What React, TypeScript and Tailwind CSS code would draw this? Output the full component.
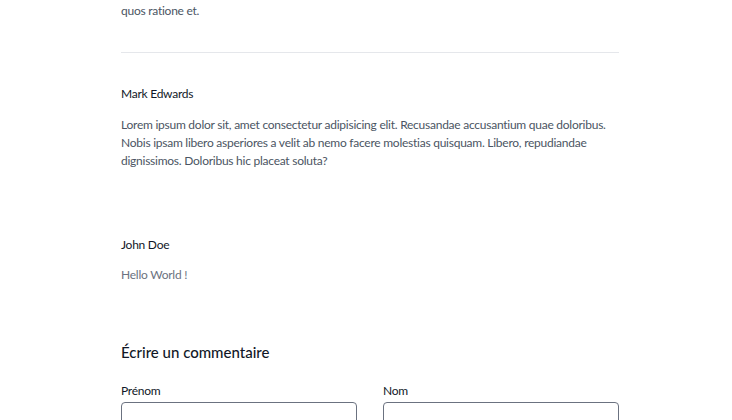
const comments = [
  {
    name: "Mark Edwards",
    body: "Lorem ipsum dolor sit, amet consectetur adipisicing elit. Recusandae accusantium quae doloribus. Nobis ipsam libero asperiores a velit ab nemo facere molestias quisquam. Libero, repudiandae dignissimos. Doloribus hic placeat soluta?",
    tone: "text-[#4b5563]",
  },
  { name: "John Doe", body: "Hello World !", tone: "text-[#6b7280]" },
];

const App = () => {
  return (
    <div className="min-h-[420px] bg-white font-['Lato',sans-serif] text-[12px] tracking-[-0.25px]">
      <div className="ml-[121px] w-[498px] pt-[2px]">
        <p className="leading-[18px] text-[#4b5563]">quos ratione et.</p>
        <div className="mt-8 border-t border-[#e5e7eb]" />

        <div className="flex flex-col gap-[66px] pt-8">
          {comments.map((c, i) => (
            <div
              key={c.name}
              className={i === 0 ? "flex flex-col gap-[13px]" : "flex flex-col gap-[12px]"}
            >
              <h4 className="leading-[18px] text-[#111827]">{c.name}</h4>
              <p className={`leading-[18px] ${c.tone}`}>{c.body}</p>
            </div>
          ))}
        </div>

        <h3 className="mt-[57px] text-[15px] font-medium leading-[22px] tracking-normal text-[#111827]">
          Écrire un commentaire
        </h3>
        <div className="mt-[19px] grid grid-cols-2 gap-[26px]">
          <label className="flex flex-col gap-[2px]">
            <span className="leading-[18px] text-[#111827]">Prénom</span>
            <input className="h-9 rounded-[4px] border border-[#6b7280] px-3" />
          </label>
          <label className="flex flex-col gap-[2px]">
            <span className="leading-[18px] text-[#111827]">Nom</span>
            <input className="h-9 rounded-[4px] border border-[#6b7280] px-3" />
          </label>
        </div>
      </div>
    </div>
  );
};

export default App;
